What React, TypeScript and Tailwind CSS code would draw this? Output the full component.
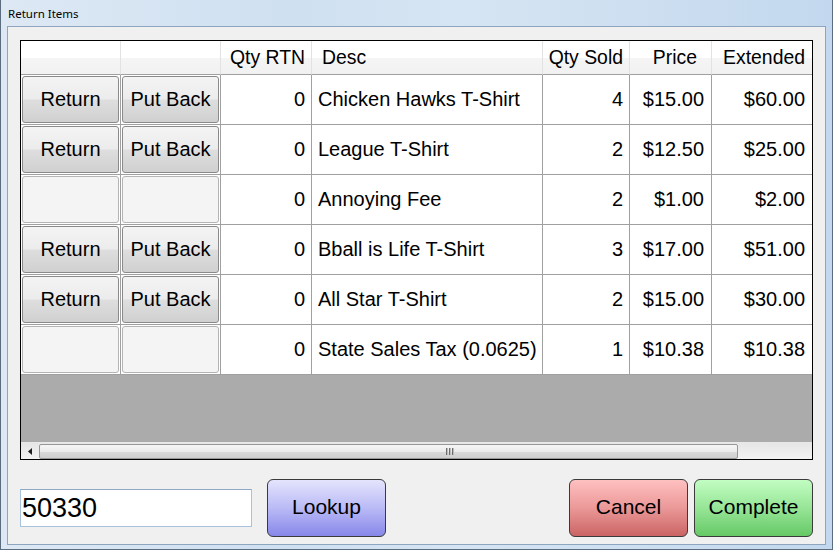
import React from "react"

const rows = [
  { btn: true, rtn: "0", desc: "Chicken Hawks T-Shirt", sold: "4", price: "$15.00", ext: "$60.00" },
  { btn: true, rtn: "0", desc: "League T-Shirt", sold: "2", price: "$12.50", ext: "$25.00" },
  { btn: false, rtn: "0", desc: "Annoying Fee", sold: "2", price: "$1.00", ext: "$2.00" },
  { btn: true, rtn: "0", desc: "Bball is Life T-Shirt", sold: "3", price: "$17.00", ext: "$51.00" },
  { btn: true, rtn: "0", desc: "All Star T-Shirt", sold: "2", price: "$15.00", ext: "$30.00" },
  { btn: false, rtn: "0", desc: "State Sales Tax (0.0625)", sold: "1", price: "$10.38", ext: "$10.38" },
]

function RowButton({ label }: { label?: string }) {
  if (!label) {
    return (
      <div className="w-full h-full rounded-[3px] border border-[#b4b4b4] bg-[#f4f4f4]"></div>
    )
  }
  return (
    <button className="w-full h-full rounded-[3px] border border-[#8a8a8a] bg-[linear-gradient(to_bottom,#f4f4f4_0%,#ececec_48%,#dedede_52%,#d0d0d0_100%)] text-[20px] text-black flex items-center justify-center pb-[2px]">
      {label}
    </button>
  )
}

export default function App() {
  const cell = "border-r border-b border-[#a0a0a0] bg-white h-[50px] flex items-center"
  const text = " pb-[2px]"
  const head = "h-[34px] pt-[1px] text-[19.4px] border-r border-[#e2e2e2] border-b border-b-[#a0a0a0] flex items-center bg-[linear-gradient(to_bottom,#ffffff_0%,#ffffff_50%,#f5f5f5_51%,#f1f1f1_100%)]"

  return (
    <div className="w-[833px] h-[550px] flex flex-col border-l border-r border-b border-[#5b6c7e] bg-[linear-gradient(to_right,#dde8f4_0%,#cfe0f1_35%,#d6e5f3_55%,#c3d8ee_100%)] font-['Liberation_Sans',Arial,sans-serif]">
      {/* Title bar */}
      <div className="h-[26px] flex items-center pl-[7px] pt-[2px]">
        <span className="font-['Noto_Sans',sans-serif] text-[11.5px] text-black">Return Items</span>
      </div>

      <div className="flex-1 flex px-[6px] pb-[4px]">
        {/* Client area */}
        <div className="flex-1 flex flex-col bg-[#f0f0f0] border border-[#8ea5bf] pt-[13px] pl-[12px] pr-[12px]">
          {/* Grid */}
          <div className="w-[793px] h-[420px] border border-black bg-[#ababab] flex flex-col">
            <div className="grid grid-cols-[100px_100px_91px_231px_87px_82px_100px] text-[20px] text-black">
              <div className={head}></div>
              <div className={head}></div>
              <div className={head + " justify-end pr-[6px]"}>Qty RTN</div>
              <div className={head + " pl-[10px]"}>Desc</div>
              <div className={head + " justify-end pr-[6px]"}>Qty Sold</div>
              <div className={head + " justify-end pr-[14px]"}>Price</div>
              <div className={head + " justify-end pr-[7px] border-r-0"}>Extended</div>

              {rows.map((r, i) => (
                <React.Fragment key={i}>
                  <div className={cell + " pl-[1px] pr-[1px] py-[1px]"}>
                    <RowButton label={r.btn ? "Return" : undefined} />
                  </div>
                  <div className={cell + " pl-[1px] pr-[1px] py-[1px]"}>
                    <RowButton label={r.btn ? "Put Back" : undefined} />
                  </div>
                  <div className={cell + text + " justify-end pr-[6px]"}>{r.rtn}</div>
                  <div className={cell + text + " pl-[6px]"}>{r.desc}</div>
                  <div className={cell + text + " justify-end pr-[6px]"}>{r.sold}</div>
                  <div className={cell + text + " justify-end pr-[7px]"}>{r.price}</div>
                  <div className={cell + text + " justify-end pr-[7px] border-r-0"}>{r.ext}</div>
                </React.Fragment>
              ))}
            </div>

            <div className="flex-1"></div>

            {/* Horizontal scrollbar */}
            <div className="h-[17px] flex items-center bg-[linear-gradient(to_bottom,#e6e6e6,#f2f2f2)] border-t border-[#e8e8e8]">
              <div className="w-[18px] h-full flex items-center justify-center">
                <svg width="4" height="7" viewBox="0 0 4 7">
                  <path d="M4 0 L0 3.5 L4 7 Z" fill="#1e1e1e" />
                </svg>
              </div>
              <div className="w-[699px] h-[15px] rounded-[2px] border border-[#979797] bg-[linear-gradient(to_bottom,#f6f6f6_0%,#ebebeb_50%,#d9d9d9_51%,#cfcfcf_100%)] flex items-center pl-[406px]">
                <div className="flex gap-[1px]">
                  <div className="w-[2px] h-[7px] bg-[#6e6e6e] border-r border-[#bcbcbc]"></div>
                  <div className="w-[2px] h-[7px] bg-[#6e6e6e] border-r border-[#bcbcbc]"></div>
                  <div className="w-[2px] h-[7px] bg-[#6e6e6e] border-r border-[#bcbcbc]"></div>
                </div>
              </div>
              <div className="flex-1"></div>
            </div>
          </div>

          {/* Bottom controls */}
          <div className="mt-[19px] flex items-center w-[793px]">
            <div className="w-[232px] h-[38px] bg-white border border-[#a9c3dc] border-t-[#8fa9c4] flex items-center pl-[1px]">
              <span className="text-[27px] text-black">50330</span>
            </div>
            <button className="ml-[15px] w-[119px] h-[58px] rounded-[6px] border border-[#3a3a3a] bg-[linear-gradient(to_bottom,#e4e4fd,#babaf6_50%,#8787ea)] text-[21px] text-black pb-[2px]">
              Lookup
            </button>
            <button className="ml-auto w-[119px] h-[58px] rounded-[6px] border border-[#3a3a3a] bg-[linear-gradient(to_bottom,#ffc0c0,#eb9898_50%,#cb6464)] text-[21px] text-black pb-[2px]">
              Cancel
            </button>
            <button className="ml-[6px] w-[119px] h-[58px] rounded-[6px] border border-[#3a3a3a] bg-[linear-gradient(to_bottom,#c2fdc2,#97e597_50%,#66c966)] text-[21px] text-black pb-[2px]">
              Complete
            </button>
          </div>
        </div>
      </div>
    </div>
  )
}
